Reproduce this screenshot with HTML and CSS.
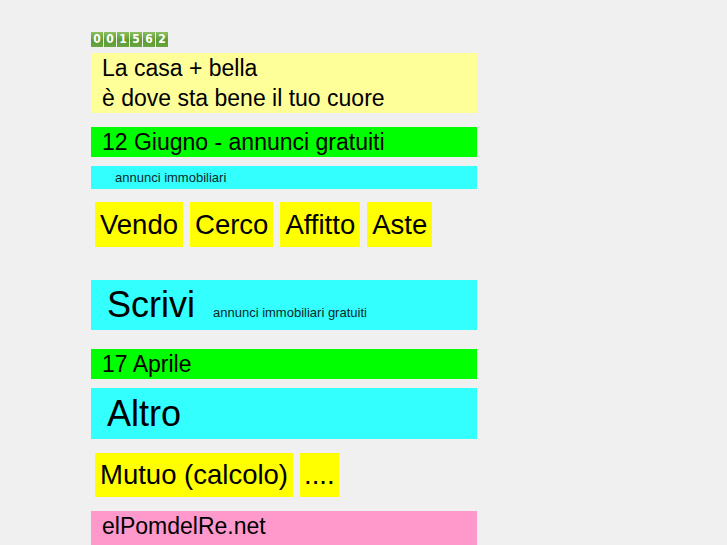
FILE: index.html
```html
<!DOCTYPE html>
<html lang="it">
<head>
<meta charset="utf-8">
<title>La casa + bella</title>
<link rel="stylesheet" href="styles.css">
</head>
<body>
<div class="page">
  <div class="counter">
    <span class="digit">0</span><span class="digit">0</span><span class="digit">1</span><span class="digit">5</span><span class="digit">6</span><span class="digit">2</span>
  </div>
  <div class="motto">La casa + bella<br>è dove sta bene il tuo cuore</div>
  <div class="bar green">12 Giugno - annunci gratuiti</div>
  <div class="subbar">annunci immobiliari</div>
  <div class="buttons">
    <span class="btn">Vendo</span>
    <span class="btn">Cerco</span>
    <span class="btn">Affitto</span>
    <span class="btn">Aste</span>
  </div>
  <div class="big scrivi"><span class="bigword">Scrivi</span><span class="small">annunci immobiliari gratuiti</span></div>
  <div class="bar green">17 Aprile</div>
  <div class="big altro"><span class="bigword">Altro</span></div>
  <div class="buttons lower">
    <span class="btn">Mutuo (calcolo)</span>
    <span class="btn dots">....</span>
  </div>
  <div class="bar pink">elPomdelRe.net</div>
</div>
</body>
</html>
```
FILE: styles.css
```css
html, body {
  margin: 0;
  padding: 0;
  background: #f0f0f0;
}
body {
  font-family: "Liberation Sans", Arial, sans-serif;
  color: #000;
}
.page {
  width: 386px;
  margin-left: 91px;
  padding-top: 32px;
  display: flex;
  flex-direction: column;
}
.counter {
  display: flex;
  gap: 1px;
  height: 15px;
  margin-bottom: 6px;
}
.digit {
  width: 12px;
  height: 15px;
  background: linear-gradient(#8cc060, #5e9a34 55%, #6aa640);
  color: #fff;
  font-family: "DejaVu Sans Condensed", "DejaVu Sans", sans-serif;
  font-weight: bold;
  font-size: 12px;
  line-height: 15px;
  text-align: center;
}
.motto {
  background: #ffff99;
  font-size: 23px;
  line-height: 30px;
  padding-left: 11px;
  margin-bottom: 14px;
}
.bar {
  font-size: 23px;
  line-height: 30px;
  padding-left: 11px;
}
.green {
  background: #00ff00;
  margin-bottom: 9px;
}
.subbar {
  background: #33ffff;
  font-size: 13px;
  line-height: 23px;
  padding-left: 24px;
  color: #0a2a2a;
  margin-bottom: 13px;
}
.buttons {
  display: flex;
  gap: 7px;
  padding-left: 4px;
  margin-bottom: 33px;
}
.btn {
  background: #ffff00;
  font-size: 27.5px;
  line-height: 45px;
  padding: 0 5px;
}
.btn.dots {
  padding: 0 4px;
}
.buttons.lower {
  margin-bottom: 14px;
}
.buttons.lower .btn {
  line-height: 44px;
}
.big {
  background: #33ffff;
  padding-left: 16px;
  display: flex;
  align-items: baseline;
}
.bigword {
  font-size: 36px;
  line-height: 50px;
}
.scrivi {
  margin-bottom: 19px;
}
.altro {
  height: 51px;
  margin-bottom: 14px;
}
.altro .bigword {
  line-height: 51px;
}
.small {
  font-size: 13px;
  color: #0a2a2a;
  margin-left: 18px;
}
.pink {
  background: #ff99cc;
  height: 40px;
}
```
